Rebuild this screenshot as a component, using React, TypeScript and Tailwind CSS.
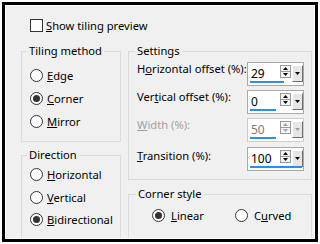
import React from 'react';

const Mn = ({ text, at }: { text: string; at: number }) => (
  <>
    {text.slice(0, at)}
    <u>{text[at]}</u>
    {text.slice(at + 1)}
  </>
);

function Radio({ label, at, checked, gap = 4 }: { label: string; at: number; checked?: boolean; gap?: number }) {
  return (
    <div className={`flex items-center h-[13px] ${gap === 4 ? 'gap-[4px]' : 'gap-[6px]'}`}>
      <div className="w-[13px] h-[13px] rounded-full border border-[#333] bg-white flex items-center justify-center shrink-0">
        {checked && <div className="w-[7px] h-[7px] rounded-full bg-[#333]" />}
      </div>
      <span className="leading-[13px] whitespace-nowrap">
        <Mn text={label} at={at} />
      </span>
    </div>
  );
}

function Arrow({ up, muted }: { up?: boolean; muted?: boolean }) {
  return (
    <svg width="5" height="3" viewBox="0 0 5 3" className="block">
      <path d={up ? 'M2.5 0 L5 3 L0 3 Z' : 'M0 0 L5 0 L2.5 3 Z'} fill={muted ? '#a0a0a0' : '#000'} />
    </svg>
  );
}

function Spinner({ value, bar, disabled }: { value: string; bar: number; disabled?: boolean }) {
  return (
    <div
      className={`relative w-[57px] h-[24px] bg-white border flex ${
        disabled ? 'border-[#cccccc]' : 'border-[#a8a8a8]'
      }`}
    >
      <div className={`w-[32px] pl-[3px] leading-[22px] text-[12px] ${disabled ? 'text-[#7a7a7a]' : 'text-black'}`}>
        {value}
      </div>
      <div className="w-[11px] mt-[2px] flex flex-col">
        <div className="h-[7px] border border-[#9a9a9a] bg-[#f4f4f4] flex items-center justify-center">
          <Arrow up muted={disabled} />
        </div>
        <div className="h-[6px] border border-t-0 border-[#9a9a9a] bg-[#f4f4f4] flex items-center justify-center">
          <Arrow muted={disabled} />
        </div>
      </div>
      <div className="w-[11px] ml-px mt-[2px] h-[17px] bg-[#e6e6e6] border-r border-b border-[#6e6e6e] border-l border-t border-l-white border-t-white flex items-center justify-center">
        <Arrow muted={disabled} />
      </div>
      <div className="absolute left-[2px] top-[18px] h-[2px] bg-[#2d8ee8]" style={{ width: bar }} />
    </div>
  );
}

export default function App() {
  return (
    <div className="w-[320px] h-[244px] bg-white p-[2px]">
      <div className="h-full border-[3px] border-black bg-white p-px">
        <div
          className="h-full bg-[#f0f0f0] overflow-hidden text-[11.2px] text-black"
          style={{ fontFamily: '"Noto Sans", "Open Sans", sans-serif' }}
        >
          {/* preview checkbox */}
          <div className="pt-[13px] pl-[24px] flex items-center gap-[3px] h-[26px]">
            <div className="w-[13px] h-[13px] border border-[#333] bg-white shrink-0" />
            <span className="leading-[13px]">
              <Mn text="Show tiling preview" at={0} />
            </span>
          </div>

          <div className="flex pl-[15px] mt-[11px] gap-[7px]">
            {/* left column */}
            <div className="w-[100px] flex flex-col gap-[5px]">
              <fieldset className="h-[99px] border border-[#dcdcdc]">
                <legend className="ml-[5px] px-[2px] leading-[16px]">Tiling method</legend>
                <div className="pl-[8px] pt-[10px] flex flex-col gap-[10px]">
                  <Radio label="Edge" at={0} />
                  <Radio label="Corner" at={0} checked />
                  <Radio label="Mirror" at={0} />
                </div>
              </fieldset>
              <fieldset className="h-[140px] border border-[#dcdcdc]">
                <legend className="ml-[5px] px-[2px] leading-[16px]">Direction</legend>
                <div className="pl-[8px] pt-[5px] flex flex-col gap-[9.5px]">
                  <Radio label="Horizontal" at={0} />
                  <Radio label="Vertical" at={0} />
                  <Radio label="Bidirectional" at={0} checked />
                </div>
              </fieldset>
            </div>

            {/* right column */}
            <div className="w-[184px] flex flex-col gap-[6px]">
              <fieldset className="h-[137px] border border-[#dcdcdc]">
                <legend className="ml-[6px] px-[2px] leading-[16px]">Settings</legend>
                <div className="pl-[8px] pt-[3px] flex flex-col gap-[4px]">
                  <div className="flex h-[24px]">
                    <span className="w-[110px] leading-[13px] whitespace-nowrap">
                      <Mn text="Horizontal offset (%):" at={1} />
                    </span>
                    <Spinner value="29" bar={34} />
                  </div>
                  <div className="flex h-[24px]">
                    <span className="w-[110px] leading-[13px] whitespace-nowrap">
                      <Mn text="Vertical offset (%):" at={3} />
                    </span>
                    <Spinner value="0" bar={26} />
                  </div>
                  <div className="flex h-[24px]">
                    <span className="w-[110px] leading-[13px] whitespace-nowrap text-[#a0a0a0]">
                      <Mn text="Width (%):" at={0} />
                    </span>
                    <Spinner value="50" bar={26} disabled />
                  </div>
                  <div className="flex h-[24px] mt-px">
                    <span className="w-[110px] leading-[17px] whitespace-nowrap">
                      <Mn text="Transition (%):" at={0} />
                    </span>
                    <Spinner value="100" bar={52} />
                  </div>
                </div>
              </fieldset>
              <fieldset className="h-[80px] border border-[#dcdcdc]">
                <legend className="ml-[7px] px-[2px] leading-[16px]">Corner style</legend>
                <div className="pl-[23px] pt-[7px] flex">
                  <div className="w-[83px]">
                    <Radio label="Linear" at={0} checked gap={6} />
                  </div>
                  <Radio label="Curved" at={1} gap={2} />
                </div>
              </fieldset>
            </div>
          </div>
        </div>
      </div>
    </div>
  );
}
